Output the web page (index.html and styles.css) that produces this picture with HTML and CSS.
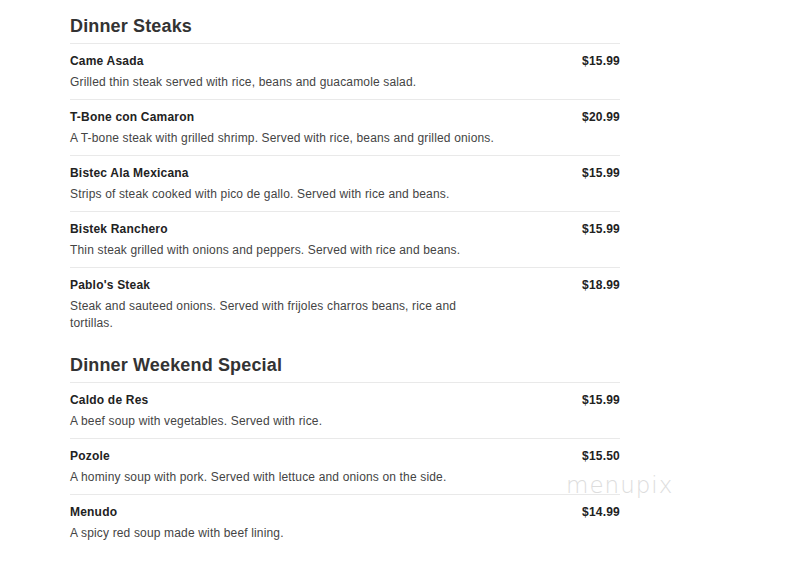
FILE: index.html
```html
<!DOCTYPE html>
<html>
<head>
<meta charset="utf-8">
<link rel="stylesheet" href="styles.css">
</head>
<body>
<div class="menu">
  <section class="section">
    <h2 class="section-title">Dinner Steaks</h2>
    <div class="item">
      <div class="item-text"><div class="item-name">Came Asada</div><div class="item-desc">Grilled thin steak served with rice, beans and guacamole salad.</div></div>
      <div class="item-price">$15.99</div>
    </div>
    <div class="item">
      <div class="item-text"><div class="item-name">T-Bone con Camaron</div><div class="item-desc">A T-bone steak with grilled shrimp. Served with rice, beans and grilled onions.</div></div>
      <div class="item-price">$20.99</div>
    </div>
    <div class="item">
      <div class="item-text"><div class="item-name">Bistec Ala Mexicana</div><div class="item-desc">Strips of steak cooked with pico de gallo. Served with rice and beans.</div></div>
      <div class="item-price">$15.99</div>
    </div>
    <div class="item">
      <div class="item-text"><div class="item-name">Bistek Ranchero</div><div class="item-desc">Thin steak grilled with onions and peppers. Served with rice and beans.</div></div>
      <div class="item-price">$15.99</div>
    </div>
    <div class="item">
      <div class="item-text"><div class="item-name">Pablo's Steak</div><div class="item-desc">Steak and sauteed onions. Served with frijoles charros beans, rice and tortillas.</div></div>
      <div class="item-price">$18.99</div>
    </div>
  </section>
  <section class="section">
    <h2 class="section-title">Dinner Weekend Special</h2>
    <div class="item">
      <div class="item-text"><div class="item-name">Caldo de Res</div><div class="item-desc">A beef soup with vegetables. Served with rice.</div></div>
      <div class="item-price">$15.99</div>
    </div>
    <div class="item">
      <div class="item-text"><div class="item-name">Pozole</div><div class="item-desc">A hominy soup with pork. Served with lettuce and onions on the side.</div></div>
      <div class="item-price">$15.50</div>
    </div>
    <div class="item">
      <div class="item-text"><div class="item-name">Menudo</div><div class="item-desc">A spicy red soup made with beef lining.</div></div>
      <div class="item-price">$14.99</div>
    </div>
  </section>
</div>
<div class="watermark">menupix</div>
</body>
</html>
```

FILE: styles.css
```css
html, body {
  margin: 0;
  padding: 0;
  background: #fff;
}
body {
  font-family: "Liberation Sans", Arial, sans-serif;
  color: #333;
}
.menu {
  width: 550px;
  margin-left: 70px;
  padding-top: 14px;
}
.section + .section {
  margin-top: 13px;
}
.section-title {
  margin: 0 0 5px 0;
  font-size: 18px;
  line-height: 24px;
  font-weight: bold;
  letter-spacing: 0.15px;
  color: #333;
}
.item {
  display: flex;
  justify-content: space-between;
  align-items: flex-start;
  border-top: 1px solid #e9e9e9;
  padding: 9px 0 8px 0;
}
.item-text {
  width: 430px;
}
.item-name {
  font-size: 12px;
  line-height: 16px;
  font-weight: bold;
  letter-spacing: 0.2px;
  color: #222;
}
.item-desc {
  margin-top: 5px;
  font-size: 12px;
  line-height: 17px;
  letter-spacing: 0.16px;
  color: #444;
}
.item-price {
  font-size: 12px;
  line-height: 16px;
  font-weight: bold;
  letter-spacing: 0.2px;
  color: #222;
}
.watermark {
  position: absolute;
  left: 566px;
  top: 472px;
  font-family: "DejaVu Sans", sans-serif;
  font-weight: 200;
  font-size: 23px;
  letter-spacing: 1px;
  color: #dddddd;
}
```
